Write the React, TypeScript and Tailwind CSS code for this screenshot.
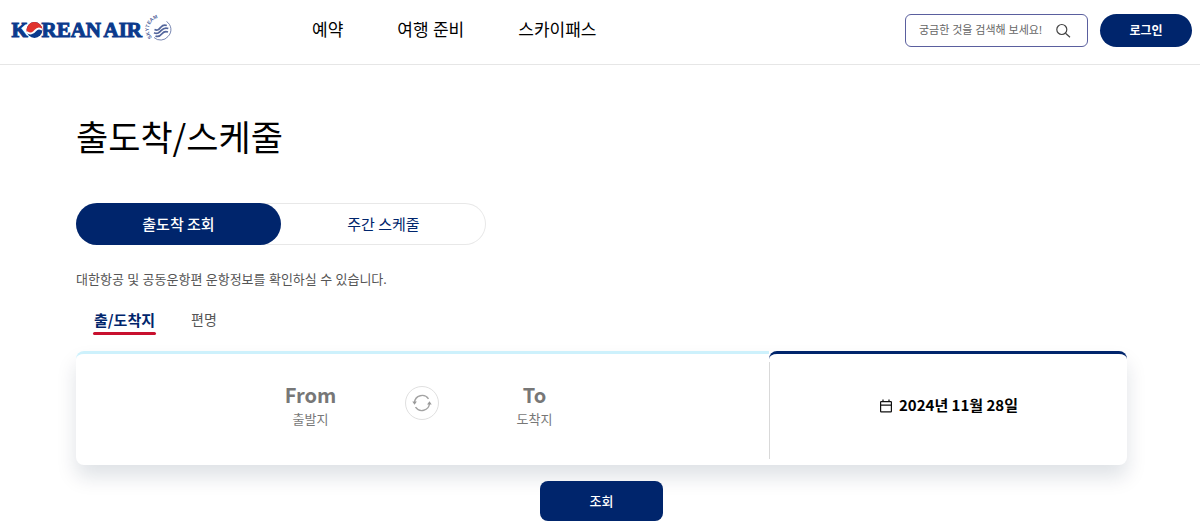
import React, { useState } from 'react';

function KoreanAirLogo() {
  return (
    <svg className="h-8 w-[168px]" viewBox="0 0 168 32" role="img" aria-label="Korean Air SkyTeam">
      <g
        fill="#0b3a8c"
        stroke="#0b3a8c"
        strokeWidth="1"
        fontFamily="'Liberation Serif', serif"
        fontWeight="700"
        fontSize="21"
      >
        <text x="1.500" y="23">K</text>
        <text x="31.500" y="23">REAN</text>
        <text x="93.500" y="23">AIR</text>
      </g>
      <g transform="translate(24.500 16)">
        <circle r="7.9" fill="#0b3a8c" />
        <path d="M-7.700 1.700A7.900 7.900 0 1 1 7.900-.3C6-2.400 3-2.600 1 0-1.400 3.200-5.400 4-7.700 1.700Z" fill="#e0322d" />
        <path d="M-7.600 2C-4.800 4.600-1.400 3.600 1 .4 3-2.200 5.600-2 7.600-.2" fill="none" stroke="#fff" strokeWidth="2" />
      </g>
      <g fill="none" stroke="#53669c">
        <path d="M156.500 7.500A9.600 9.600 0 0 1 158 22.500A9.600 9.600 0 0 1 144 23.500" strokeWidth="0.8" />
        <path d="M144.500 15.500c3.200 1.500 4.500-.2 6.300-2.300s3.500-2.600 6-1.700" strokeWidth="1.700" />
        <path d="M144 18.800c3.500 1.700 5.300-.2 7.300-2.400s4.200-3 7-1.900" strokeWidth="1.700" />
        <path d="M145.500 22c3.200 1.500 4.800-.2 6.500-2.300s3.500-2.600 6-1.700" strokeWidth="1.700" />
      </g>
      <path id="skyteam-arc" d="M142 23.500A10 10 0 0 1 159 7.500" fill="none" />
      <text fill="#53669c" fontFamily="'Liberation Sans', sans-serif" fontWeight="700" fontSize="5">
        <textPath href="#skyteam-arc">SKYTEAM</textPath>
      </text>
    </svg>
  );
}

function SearchIcon() {
  return (
    <svg className="size-4" viewBox="0 0 16 16" fill="none" stroke="#444" strokeWidth="1.2" aria-hidden="true">
      <circle cx="6.800" cy="7.500" r="5" />
      <path d="M10.500 11.200 15 15.200" />
    </svg>
  );
}

function SwapIcon() {
  return (
    <svg className="size-5" viewBox="0 0 20 20" fill="none" stroke="#a3a3a3" strokeWidth="1.4" aria-hidden="true">
      <path d="M2.500 9.500A7.700 7.700 0 0 1 16.500 5.800" />
      <path d="M17.500 10.500A7.700 7.700 0 0 1 3.500 14.200" />
      <path d="M.3 8.500h4.600L2.500 11.800Z" fill="#999" stroke="none" />
      <path d="M15.100 11.500h4.600L17.500 8.200Z" fill="#999" stroke="none" />
    </svg>
  );
}

function CalendarIcon() {
  return (
    <svg className="size-3.5" viewBox="0 0 14 14" fill="none" stroke="#111" strokeWidth="1.2" aria-hidden="true">
      <rect x="1.600" y="2.600" width="10.800" height="10.200" rx="0.600" />
      <path d="M1.600 6.200h10.800M4 .6v2.400M10 .6v2.400" />
    </svg>
  );
}

const navItems = ['예약', '여행 준비', '스카이패스'];

export default function App() {
  const [view, setView] = useState('status');
  const pill = 'flex-1 rounded-full text-[15px]';
  return (
    <div className="bg-white font-['Noto_Sans_CJK_KR',sans-serif] text-black">
      <header className="flex h-[65px] items-center border-b border-[#e6e6e6] pr-2 pl-2.5 pb-1 font-['Noto_Sans','Noto_Sans_CJK_KR',sans-serif]">
        <a href="#home">
          <KoreanAirLogo />
        </a>
        <nav className="ml-[134px] flex gap-[54px] text-[17px]">
          {navItems.map((item) => (
            <a key={item} href="#menu">
              {item}
            </a>
          ))}
        </nav>
        <form className="ml-auto flex h-[33px] w-[183px] items-center rounded-md border border-[#5a5f9e] pr-4 pl-[13px]">
          <input
            type="search"
            aria-label="검색"
            placeholder="궁금한 것을 검색해 보세요!"
            className="min-w-0 flex-1 text-[11px] outline-none placeholder:text-[#666]"
          />
          <button type="button" aria-label="검색하기">
            <SearchIcon />
          </button>
        </form>
        <button
          type="button"
          className="ml-3 h-[33px] w-[92px] rounded-full bg-[#00256c] pt-0.5 text-xs font-bold text-white"
        >
          로그인
        </button>
      </header>

      <main className="pr-[73px] pl-[76px]">
        <h1 className="pt-[45px] text-[35px] leading-[52px]">출도착/스케줄</h1>

        <div className="mt-[41px] flex h-[42px] w-[410px] rounded-full inset-ring inset-ring-[#e8e8e8]">
          <button
            type="button"
            aria-pressed={view === 'status'}
            onClick={() => setView('status')}
            className={`${pill} ${view === 'status' ? 'bg-[#00256c] font-medium text-white' : 'text-[#00256c]'}`}
          >
            출도착 조회
          </button>
          <button
            type="button"
            aria-pressed={view === 'weekly'}
            onClick={() => setView('weekly')}
            className={`${pill} ${view === 'weekly' ? 'bg-[#00256c] font-medium text-white' : 'text-[#00256c]'}`}
          >
            주간 스케줄
          </button>
        </div>

        <p className="mt-6 font-['Noto_Sans','Noto_Sans_CJK_KR',sans-serif] text-[13px] leading-5 text-[#555]">
          대한항공 및 공동운항편 운항정보를 확인하실 수 있습니다.
        </p>

        <div role="tablist" className="mt-[18px] flex items-start gap-[35px] pl-[17px]">
          <button type="button" role="tab" aria-selected="true" className="text-[#00256c]">
            <span className="block px-px text-[15px] leading-[25px] font-bold">출/도착지</span>
            <span className="block h-[3px] rounded-full bg-[#c8102e]" />
          </button>
          <button type="button" role="tab" aria-selected="false" className="text-sm leading-[25px] text-[#555]">
            편명
          </button>
        </div>

        <section className="mt-4 flex h-[114px] rounded-lg shadow-[0_12px_20px_rgba(0,28,61,0.13)]">
          <div className="flex flex-[693] items-start justify-center rounded-l-lg border-t-[3px] border-[#cdf1fc] pt-[29px]">
            <button type="button" className="w-[120px] text-[#777]">
              <span className="block text-xl leading-6 font-bold">From</span>
              <span className="block text-[13px] leading-6">출발지</span>
            </button>
            <button
              type="button"
              aria-label="출발지와 도착지 바꾸기"
              className="mt-[3px] mr-9 ml-[34px] flex size-[34px] items-center justify-center rounded-full border border-[#e0e0e0]"
            >
              <SwapIcon />
            </button>
            <button type="button" className="w-[120px] text-[#777]">
              <span className="block text-xl leading-6 font-bold">To</span>
              <span className="block text-[13px] leading-6">도착지</span>
            </button>
          </div>
          <div className="flex flex-[358] rounded-t-lg rounded-br-lg border-t-[3px] border-[#00256c] pt-2 pb-1.5">
            <button
              type="button"
              className="flex flex-1 items-center justify-center gap-1.5 border-l border-[#d9d9d9] pb-2.5 text-[15px] font-bold"
            >
              <CalendarIcon />
              2024년 11월 28일
            </button>
          </div>
        </section>

        <div className="flex justify-center pt-4 pb-2.5">
          <button type="button" className="h-10 w-[123px] rounded-lg bg-[#00256c] text-[13px] font-medium text-white">
            조회
          </button>
        </div>
      </main>
    </div>
  );
}
